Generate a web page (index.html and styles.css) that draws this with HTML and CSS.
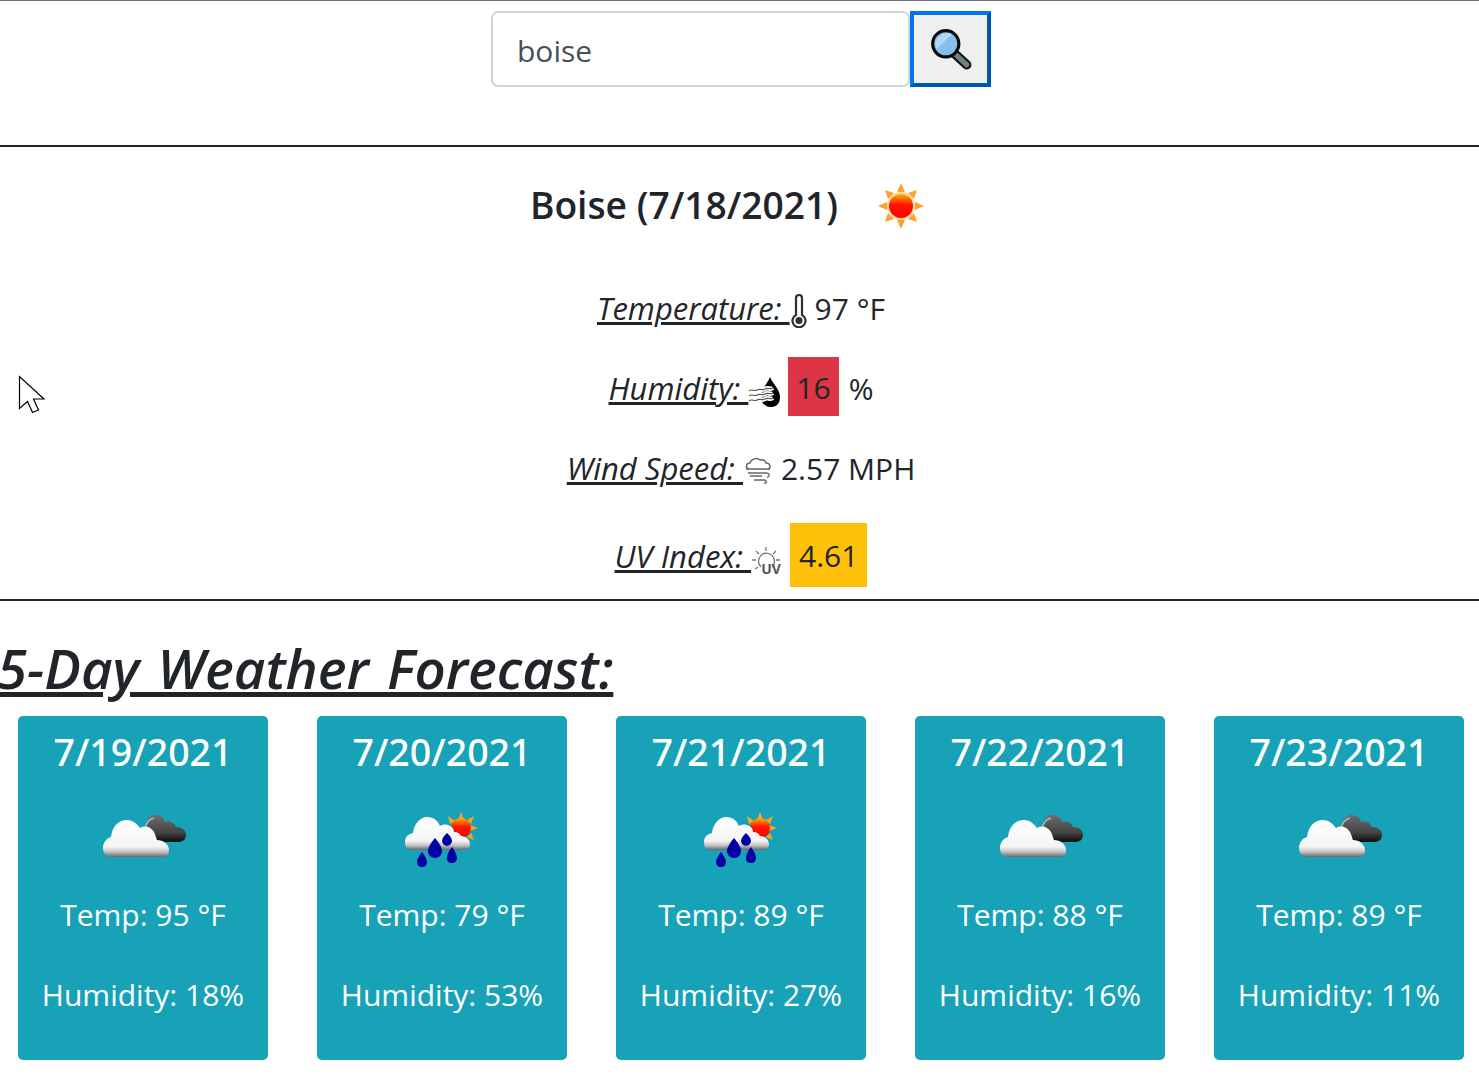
FILE: index.html
```html
<!DOCTYPE html>
<html>
    <head>
        <meta charset="utf-8">
        <title>Weather Dashboard</title>
        <link rel="stylesheet" href="styles.css">
    </head>
    <body>
        <svg class="defs" width="0" height="0">
            <defs>
                <filter id="soft"><feGaussianBlur stdDeviation="0.6" /></filter>
                <linearGradient id="white-cloud" x1="0" y1="0" x2="0" y2="1">
                    <stop offset="0" stop-color="#fff" />
                    <stop offset="0.72" stop-color="#f4f4f4" />
                    <stop offset="0.86" stop-color="#c4c4c4" />
                    <stop offset="1" stop-color="#666" />
                </linearGradient>
                <linearGradient id="dark-cloud" x1="0" y1="0" x2="0" y2="1">
                    <stop offset="0" stop-color="#6c6c6c" />
                    <stop offset="0.65" stop-color="#444" />
                    <stop offset="1" stop-color="#0c0c0c" />
                </linearGradient>
                <linearGradient id="sun-fill" x1="0" y1="0" x2="0" y2="1">
                    <stop offset="0" stop-color="#ffb300" />
                    <stop offset="0.45" stop-color="#ff1500" />
                    <stop offset="1" stop-color="#f00" />
                </linearGradient>
                <symbol id="icon-clouds" viewBox="0 -4 84 54">
                    <g filter="url(#soft)">
                        <path d="M43 18C41 8 46 0 52 0c6 0 9 3 10 7 4-2 9 0 11 5 6 0 10 3 10 8s-4 7-8 7H52z" fill="url(#dark-cloud)" />
                        <path d="M42 14c1-5 4-10 9-11" fill="none" stroke="#b5b5b5" stroke-width="1.600" />
                        <path d="M8 42c-5 0-8-4-8-9 0-6 4-10 8-11C9 12 15 5 24 5c6 0 10 4 13 8 5-3 11-1 14 4 2 4 2 6 3 8 6 0 12 4 12 10 0 5-3 7-7 7z" fill="url(#white-cloud)" />
                    </g>
                </symbol>
                <symbol id="icon-rain" viewBox="0 0 76 56">
                    <g filter="url(#soft)">
                        <g fill="#ffa21c">
                            <path d="M56 0l3 8h-6zM73 16l-8-3v6zM43 4l7 5-5 3zM69 4l-3 8-4-4zM69 28l-3-7-4 4z" />
                        </g>
                        <circle cx="56" cy="16" r="10" fill="url(#sun-fill)" />
                        <path d="M7 38c-5 0-7-3-7-8 0-5 3-8 8-9C9 12 15 5 22 5s11 4 13 9c3-2 7-2 10 0 3 1 4 4 4 6 4 0 6 2 7 4 5 0 9 4 9 8 0 4-3 6-7 6z" fill="url(#white-cloud)" />
                        <path d="M42 18c-3 4-6 7-6 10s3 6 6 6 6-3 6-6-3-6-6-10z" fill="#fff" />
                        <path d="M42 21c-3 3-5 5-5 8 0 2 2 5 5 5s5-3 5-5c0-3-2-5-5-8z" fill="#0000a8" />
                        <path d="M30 26c-4 5-7 9-7 13 0 4 3 7 7 7s7-3 7-7c0-4-3-8-7-13z" fill="#0000a8" />
                        <path d="M17 40c-3 4-5 7-5 10s2 5 5 5 5-2 5-5-2-6-5-10zM47 35c-3 4-5 7-5 11s2 5 5 5 5-2 5-5-2-7-5-11z" fill="#0000a8" />
                    </g>
                </symbol>
            </defs>
        </svg>

        <form class="search">
            <input class="search-input" name="city" value="boise">
            <button class="search-button" type="button" aria-label="search">
                <svg width="44" height="44" viewBox="0 0 42 42">
                    <path d="M24 25l12 11" stroke="#111" stroke-width="9" stroke-linecap="round" />
                    <path d="M24 25l12 11" stroke="#6f8087" stroke-width="5" stroke-linecap="round" />
                    <circle cx="16" cy="16" r="12.500" fill="#86bfec" stroke="#0a0a0a" stroke-width="3" />
                    <path d="M7 21a11 11 0 0 1 15-14z" fill="#b1d9f2" />
                </svg>
            </button>
        </form>

        <hr class="rule rule-top">

        <section class="current">
            <div class="current-title">
                <h2>Boise (7/18/2021)</h2>
                <svg class="title-icon" width="48" height="48" viewBox="0 0 48 48">
                    <g fill="#ffa033">
                        <path d="M24 1l4 9h-8zM24 47l-4-9h8zM1 24l9-4v8zM47 24l-9 4v-8zM8 8l9 3-6 6zM40 8l-3 9-6-6zM8 40l3-9 6 6zM40 40l-9-3 6-6z" />
                    </g>
                    <circle cx="24" cy="24" r="14" fill="#ffd9a0" />
                    <circle cx="24" cy="24" r="12" fill="url(#sun-fill)" />
                </svg>
            </div>

            <p class="stat">
                <span class="stat-label">Temperature: </span>
                <svg class="stat-icon" width="16" height="40" viewBox="0 0 16 40">
                    <path d="M5 10a3 3 0 0 1 6 0v17a6.500 6.500 0 1 1-6 0z" fill="#fff" stroke="#2b3035" stroke-width="2.200" />
                    <circle cx="8" cy="32.500" r="3.500" fill="#2b3035" />
                </svg>
                <span class="stat-value">97 °F</span>
            </p>
            <p class="stat">
                <span class="stat-label">Humidity: </span>
                <svg class="stat-icon" width="31" height="40" viewBox="0 0 31 40">
                    <path d="M21 9c-2 6-9 12-9 20 0 6 4 10 10 10s9-4 9-10c0-8-8-14-10-20z" fill="#000" />
                    <path d="M0 23c3-3 5 1 8-1s5 1 8-1 5 1 8-1M0 28c3-3 5 1 8-1s5 1 8-1 5 1 8-1M0 33c3-3 5 1 8-1s5 1 8-1 5 1 8-1" fill="none" stroke="#fff" stroke-width="4.500" />
                    <path d="M0 23c3-3 5 1 8-1s5 1 8-1 5 1 8-1M0 28c3-3 5 1 8-1s5 1 8-1 5 1 8-1M0 33c3-3 5 1 8-1s5 1 8-1 5 1 8-1" fill="none" stroke="#555" stroke-width="1.100" />
                </svg>
                <span class="badge badge-danger">16</span>
                <span class="stat-value stat-after-badge">%</span>
            </p>
            <p class="stat">
                <span class="stat-label">Wind Speed: </span>
                <svg class="stat-icon" width="29" height="36" viewBox="0 0 29 36" fill="none" stroke="#666" stroke-width="1.400">
                    <g transform="translate(0 5)">
                        <path d="M5 14c-4-1-3-6 1-6 1-4 7-6 10-3 3-1 6 1 6 3 4 0 6 5 2 6" />
                        <path d="M2 14h24M4 18h18c4 0 4 4 1 4M6 21h12M10 25h10c3 0 3 4 0 3" />
                    </g>
                </svg>
                <span class="stat-value">2.57 MPH</span>
            </p>
            <p class="stat stat-uv">
                <span class="stat-label">UV Index: </span>
                <svg class="stat-icon" width="30" height="44" viewBox="0 0 30 44">
                    <g fill="none" stroke="#777" stroke-width="1.300" transform="translate(0 12)">
                        <path d="M20 21a8 8 0 1 0-11 0" />
                        <path d="M14 1v4M4 5l3 3M24 5l-3 3M0 14h4M28 14h-4M3 23l3-2" />
                    </g>
                    <text class="uv-text" x="19" y="40">UV</text>
                </svg>
                <span class="badge badge-warning">4.61</span>
            </p>
        </section>

        <hr class="rule">

        <h3 class="forecast-title">5-Day Weather Forecast:</h3>

        <section class="forecast">
            <article class="card">
                <h4>7/19/2021</h4>
                <svg class="card-icon" viewBox="0 0 84 54"><use href="#icon-clouds" /></svg>
                <p>Temp: 95 °F</p>
                <p>Humidity: 18%</p>
            </article>
            <article class="card">
                <h4>7/20/2021</h4>
                <svg class="card-icon" viewBox="0 0 84 54"><use href="#icon-rain" x="3" y="1" width="76" height="56" /></svg>
                <p>Temp: 79 °F</p>
                <p>Humidity: 53%</p>
            </article>
            <article class="card">
                <h4>7/21/2021</h4>
                <svg class="card-icon" viewBox="0 0 84 54"><use href="#icon-rain" x="3" y="1" width="76" height="56" /></svg>
                <p>Temp: 89 °F</p>
                <p>Humidity: 27%</p>
            </article>
            <article class="card">
                <h4>7/22/2021</h4>
                <svg class="card-icon" viewBox="0 0 84 54"><use href="#icon-clouds" /></svg>
                <p>Temp: 88 °F</p>
                <p>Humidity: 16%</p>
            </article>
            <article class="card">
                <h4>7/23/2021</h4>
                <svg class="card-icon" viewBox="0 0 84 54"><use href="#icon-clouds" /></svg>
                <p>Temp: 89 °F</p>
                <p>Humidity: 11%</p>
            </article>
        </section>

        <svg class="pointer" width="28" height="40" viewBox="0 0 28 40">
            <path d="M1.500 1.500v32l8-7 5 11 6-2.500-5-11h10.500z" fill="#fff" stroke="#000" stroke-width="1.200" />
        </svg>
    </body>
</html>
```

FILE: styles.css
```css
html, body {
    overflow: hidden;
}
body {
    margin: 0;
    height: 1078px;
    border-top: 1px solid #6c757d;
    box-sizing: border-box;
    position: relative;
    background: #fff;
    color: #212529;
    font-family: "Open Sans", "Noto Sans", sans-serif;
    font-size: 30px;
}
.defs {
    position: absolute;
}
.search {
    display: flex;
    justify-content: center;
    padding: 10px 0 0 3px;
}
.search-input {
    box-sizing: border-box;
    width: 419px;
    height: 76px;
    padding: 3px 24px 0;
    border: 2px solid #ced4da;
    border-radius: 7px;
    color: #495057;
    font: inherit;
    outline: none;
}
.search-button {
    display: flex;
    align-items: center;
    justify-content: center;
    box-sizing: border-box;
    width: 81px;
    height: 76px;
    padding: 0;
    background: #efefef;
    border: 4px solid;
    border-color: #0075ee #0057b0 #0057b0 #0075ee;
}
.rule {
    margin: 0;
    border: 0;
    border-top: 2px solid #212529;
}
.rule-top {
    margin-top: 58px;
}
.current {
    height: 452px;
    text-align: center;
}
.current-title {
    display: flex;
    align-items: center;
    justify-content: center;
    gap: 39px;
    padding: 31px 24px 0 0;
}
.current-title h2 {
    margin: 0;
    font-size: 37.200px;
    font-weight: 600;
}
.title-icon {
    margin-top: 4px;
}
.stat {
    display: flex;
    align-items: center;
    justify-content: center;
    box-sizing: border-box;
    height: 60px;
    margin: 20px 0 0;
    padding: 0 0 2px 3px;
}
.stat:first-of-type {
    margin-top: 49px;
}
.stat-uv {
    height: 64px;
    margin-top: 24px;
    padding: 2px 0 0 3px;
}
.stat-label {
    font-size: 31px;
    font-style: italic;
    text-decoration: underline;
    white-space: pre;
}
.stat-icon {
    flex: none;
    margin: 0 8px 0 1px;
}
.stat-after-badge {
    margin-left: 10px;
}
.badge {
    display: flex;
    align-items: center;
    padding: 1px 9px 0;
    box-sizing: border-box;
}
.badge-danger {
    height: 59px;
    margin-bottom: 3px;
    padding: 1px 8px 0;
    background: #dc3545;
}
.badge-warning {
    height: 64px;
    margin-bottom: 2px;
    background: #ffc107;
}
.uv-text {
    fill: #555;
    font-size: 14px;
    font-weight: 700;
    text-anchor: middle;
}
.forecast-title {
    margin: 33px 0 0 -3px;
    font-size: 54.500px;
    font-style: italic;
    font-weight: 600;
    line-height: 68px;
    text-decoration: underline;
    word-spacing: 4px;
    white-space: nowrap;
}
.forecast {
    display: flex;
    gap: 49px;
    padding: 14px 0 0 18px;
}
.card {
    display: flex;
    flex-direction: column;
    align-items: center;
    box-sizing: border-box;
    width: 250px;
    height: 344px;
    padding-top: 10px;
    background: #17a2b8;
    border-radius: 5px;
    color: #fff;
}
.card h4 {
    margin: 0;
    font-family: "Noto Sans", "Open Sans", sans-serif;
    font-size: 37.500px;
    font-weight: 500;
    line-height: 52px;
}
.card-icon {
    width: 84px;
    height: 54px;
    margin: 33px 0 30px 4px;
    overflow: visible;
}
.card p {
    margin: 0 0 40px;
    line-height: 40px;
    white-space: nowrap;
}
.pointer {
    position: absolute;
    left: 18px;
    top: 374px;
}
```
